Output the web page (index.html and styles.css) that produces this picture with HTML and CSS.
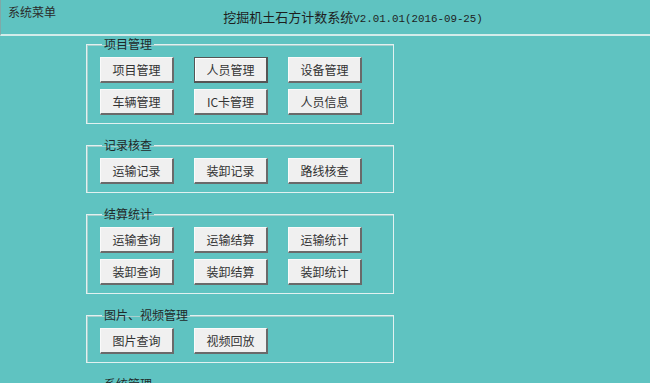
FILE: index.html
```html
<!DOCTYPE html>
<html>
    <head>
        <meta charset="utf-8">
        <link rel="stylesheet" href="styles.css">
        <title>系统菜单</title>
    </head>
    <body>
        <div class="header">
            <div class="menu-title">系统菜单</div>
            <div class="app-title">挖掘机土石方计数系统<span class="ver">V2.01.01(2016-09-25)</span></div>
        </div>

        <div class="groups">
            <fieldset class="group">
                <legend>项目管理</legend>
                <div class="btns">
                    <button type="button">项目管理</button>
                    <button type="button" class="focus">人员管理</button>
                    <button type="button">设备管理</button>
                    <button type="button">车辆管理</button>
                    <button type="button">IC卡管理</button>
                    <button type="button">人员信息</button>
                </div>
            </fieldset>

            <fieldset class="group">
                <legend>记录核查</legend>
                <div class="btns">
                    <button type="button">运输记录</button>
                    <button type="button">装卸记录</button>
                    <button type="button">路线核查</button>
                </div>
            </fieldset>

            <fieldset class="group">
                <legend>结算统计</legend>
                <div class="btns">
                    <button type="button">运输查询</button>
                    <button type="button">运输结算</button>
                    <button type="button">运输统计</button>
                    <button type="button">装卸查询</button>
                    <button type="button">装卸结算</button>
                    <button type="button">装卸统计</button>
                </div>
            </fieldset>

            <fieldset class="group">
                <legend>图片、视频管理</legend>
                <div class="btns">
                    <button type="button">图片查询</button>
                    <button type="button">视频回放</button>
                </div>
            </fieldset>

            <fieldset class="group">
                <legend>系统管理</legend>
                <div class="btns empty"></div>
            </fieldset>
        </div>
    </body>
</html>
```

FILE: styles.css
```css
body {
    margin: 0;
    background-color: #5fc3c1;
    font-family: "Noto Sans CJK SC", "Liberation Sans", sans-serif;
    font-size: 12px;
    color: #222;
    overflow: hidden;
}
.header {
    display: flex;
    height: 34px;
    border-left: 1px solid #7fa9a8;
    border-bottom: 2px solid #d3ecea;
}
.menu-title {
    padding: 4px 0 0 7px;
    line-height: 16px;
    color: #2b2b2b;
}
.app-title {
    flex: 1;
    text-align: center;
    padding-top: 9px;
    line-height: 16px;
    font-size: 13px;
    color: #1e1e1e;
}
.ver {
    font-family: "Liberation Mono", monospace;
    font-size: 10.8px;
}
.groups {
    display: flex;
    flex-direction: column;
    gap: 14px;
    padding: 1px 0 0 86px;
}
.group {
    width: 293px;
    margin: 0;
    padding: 6px 0 8px 13px;
    border: 1px solid #e2f1f0;
    box-shadow: inset 1px 1px 0 #a8cfcd;
}
.group legend {
    padding: 0 2px;
    margin-left: 2px;
    line-height: 14px;
    color: #1f2a2a;
}
.btns {
    display: grid;
    grid-template-columns: repeat(3, 74px);
    column-gap: 20px;
    row-gap: 6px;
}
.btns.empty {
    height: 26px;
}
.btns button {
    width: 74px;
    height: 26px;
    padding: 0;
    background: #f0f0f0;
    border: 1px solid #fafafa;
    border-right: 2px solid #6a6a6a;
    border-bottom: 2px solid #6a6a6a;
    font-family: "Noto Sans CJK SC", "Liberation Sans", sans-serif;
    font-size: 12px;
    color: #333;
}
.btns button.focus {
    border: 1px solid #555;
    border-right: 2px solid #555;
    border-bottom: 2px solid #555;
    box-shadow: inset 1px 1px 0 #fff;
}
```
